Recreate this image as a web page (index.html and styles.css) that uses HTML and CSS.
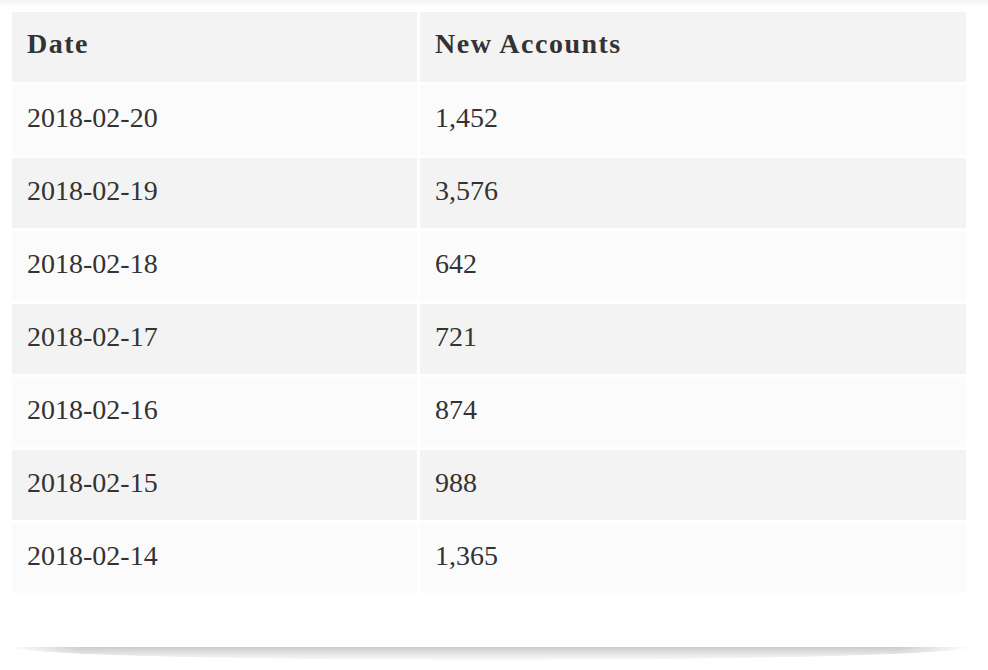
FILE: index.html
```html
<!DOCTYPE html>
<html>
<head>
<meta charset="utf-8">
<link rel="stylesheet" href="styles.css">
</head>
<body>
<div class="card">
  <table class="data">
    <thead>
      <tr><th class="col-date">Date</th><th>New Accounts</th></tr>
    </thead>
    <tbody>
      <tr><td>2018-02-20</td><td>1,452</td></tr>
      <tr><td>2018-02-19</td><td>3,576</td></tr>
      <tr><td>2018-02-18</td><td>642</td></tr>
      <tr><td>2018-02-17</td><td>721</td></tr>
      <tr><td>2018-02-16</td><td>874</td></tr>
      <tr><td>2018-02-15</td><td>988</td></tr>
      <tr><td>2018-02-14</td><td>1,365</td></tr>
    </tbody>
  </table>
</div>
<div class="card-shadow"></div>
</body>
</html>
```
FILE: styles.css
```css
html, body {
  margin: 0;
  padding: 0;
  background: #ffffff;
}

.card {
  padding: 9px 19px 51px 9px;
  background: linear-gradient(#f2f2f2 0px, #ffffff 7px, #ffffff 100%);
}

.data {
  width: 960px;
  border-collapse: separate;
  border-spacing: 3px;
  font-family: "Liberation Serif", "Times New Roman", serif;
  font-size: 28px;
  color: #333333;
}

.data th,
.data td {
  height: 66px;
  padding: 0 15px 4px 15px;
  text-align: left;
  vertical-align: middle;
  line-height: 1;
}

.data th {
  height: 64px;
  background: #f3f3f3;
  font-weight: bold;
  letter-spacing: 1.5px;
  padding-bottom: 6px;
}

.data .col-date {
  width: 375px;
}

.data tbody tr:nth-child(odd) td {
  background: #fbfbfb;
}

.data tbody tr:nth-child(even) td {
  background: #f3f3f3;
}

.card-shadow {
  height: 13px;
  margin: 0 18px 0 10px;
  background: linear-gradient(rgba(0, 0, 0, 0.2), rgba(0, 0, 0, 0.02));
  border-radius: 0 0 50% 50% / 0 0 100% 100%;
  -webkit-mask-image: linear-gradient(to right, transparent 0, #000 70px, #000 calc(100% - 70px), transparent 100%);
  mask-image: linear-gradient(to right, transparent 0, #000 70px, #000 calc(100% - 70px), transparent 100%);
}
```
